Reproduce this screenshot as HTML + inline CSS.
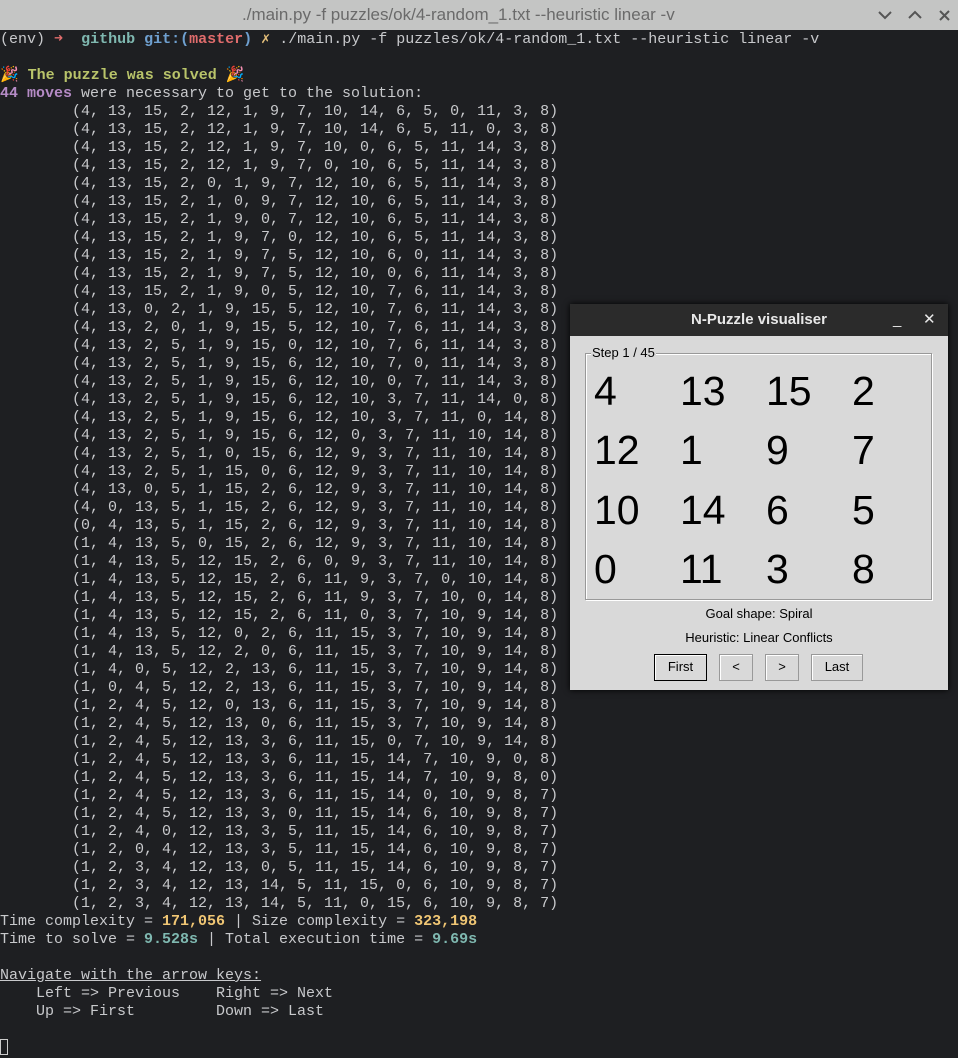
<!DOCTYPE html>
<html><head><meta charset="utf-8"><style>
body{margin:0;width:958px;height:1058px;background:#1e1f22;overflow:hidden;position:relative;font-family:"Liberation Mono",monospace;}
#tb{position:absolute;left:0;top:0;width:958px;height:30px;background:#c4c5c4;color:#6a6a6a;font:17px "Liberation Sans",sans-serif;}
#tb .t{position:absolute;left:242px;top:5px;}
#term{position:absolute;left:0;top:31px;font-size:15px;line-height:18px;color:#c8c9cc;white-space:pre;}
.r{color:#e06c6c}.c{color:#7fb8b0;font-weight:bold}.b{color:#6fa0d0;font-weight:bold}.y{color:#e5c07b}.g{color:#b9c46a;font-weight:bold}.p{color:#b58bc6;font-weight:bold}.o{color:#f0c674;font-weight:bold}.tl{color:#7fb8b0;font-weight:bold}
#win{position:absolute;left:570px;top:304px;width:378px;height:386px;background:#d9d9d9;font-family:"Liberation Sans",sans-serif;box-shadow:0 0 6px #000;}
#wt{height:32px;background:#2b2b2b;color:#e8e8e8;font-size:15px;font-weight:bold;text-align:center;line-height:32px;position:relative;}
#grp{position:absolute;left:15px;top:49px;width:345px;height:245px;border:1px solid #999;box-shadow:inset 1px 1px #fff,1px 1px #fff;}
#grp .l{position:absolute;left:5px;top:-9px;background:#d9d9d9;font-size:13px;padding:0 1px;color:#000;}
.n{position:absolute;font-size:41px;color:#000;}
.lab{position:absolute;width:378px;text-align:center;font-size:13px;color:#000;}
.btn{position:absolute;top:350px;height:25px;border:1px solid #999;box-shadow:inset 1px 1px #fff;text-align:center;font-size:13px;line-height:24px;color:#000;}
</style></head><body>
<div id="tb"><span class="t">./main.py -f puzzles/ok/4-random_1.txt --heuristic linear -v</span>
<svg style="position:absolute;left:876px;top:8px" width="80" height="14"><path d="M3 4l6 6 6-6" stroke="#555" stroke-width="2" fill="none"/><path d="M33 10l6-6 6 6" stroke="#555" stroke-width="2" fill="none"/><path d="M64 3l9 9M73 3l-9 9" stroke="#555" stroke-width="2"/></svg></div>
<div id="term">(env) <span class="r">➜</span>  <span class="c">github</span> <span class="b">git:(</span><span class="r" style="font-weight:bold">master</span><span class="b">)</span> <span class="y">✗</span> ./main.py -f puzzles/ok/4-random_1.txt --heuristic linear -v

<span class="g">🎉 The puzzle was solved 🎉</span>
<span class="p">44 moves</span> were necessary to get to the solution:
        (4, 13, 15, 2, 12, 1, 9, 7, 10, 14, 6, 5, 0, 11, 3, 8)
        (4, 13, 15, 2, 12, 1, 9, 7, 10, 14, 6, 5, 11, 0, 3, 8)
        (4, 13, 15, 2, 12, 1, 9, 7, 10, 0, 6, 5, 11, 14, 3, 8)
        (4, 13, 15, 2, 12, 1, 9, 7, 0, 10, 6, 5, 11, 14, 3, 8)
        (4, 13, 15, 2, 0, 1, 9, 7, 12, 10, 6, 5, 11, 14, 3, 8)
        (4, 13, 15, 2, 1, 0, 9, 7, 12, 10, 6, 5, 11, 14, 3, 8)
        (4, 13, 15, 2, 1, 9, 0, 7, 12, 10, 6, 5, 11, 14, 3, 8)
        (4, 13, 15, 2, 1, 9, 7, 0, 12, 10, 6, 5, 11, 14, 3, 8)
        (4, 13, 15, 2, 1, 9, 7, 5, 12, 10, 6, 0, 11, 14, 3, 8)
        (4, 13, 15, 2, 1, 9, 7, 5, 12, 10, 0, 6, 11, 14, 3, 8)
        (4, 13, 15, 2, 1, 9, 0, 5, 12, 10, 7, 6, 11, 14, 3, 8)
        (4, 13, 0, 2, 1, 9, 15, 5, 12, 10, 7, 6, 11, 14, 3, 8)
        (4, 13, 2, 0, 1, 9, 15, 5, 12, 10, 7, 6, 11, 14, 3, 8)
        (4, 13, 2, 5, 1, 9, 15, 0, 12, 10, 7, 6, 11, 14, 3, 8)
        (4, 13, 2, 5, 1, 9, 15, 6, 12, 10, 7, 0, 11, 14, 3, 8)
        (4, 13, 2, 5, 1, 9, 15, 6, 12, 10, 0, 7, 11, 14, 3, 8)
        (4, 13, 2, 5, 1, 9, 15, 6, 12, 10, 3, 7, 11, 14, 0, 8)
        (4, 13, 2, 5, 1, 9, 15, 6, 12, 10, 3, 7, 11, 0, 14, 8)
        (4, 13, 2, 5, 1, 9, 15, 6, 12, 0, 3, 7, 11, 10, 14, 8)
        (4, 13, 2, 5, 1, 0, 15, 6, 12, 9, 3, 7, 11, 10, 14, 8)
        (4, 13, 2, 5, 1, 15, 0, 6, 12, 9, 3, 7, 11, 10, 14, 8)
        (4, 13, 0, 5, 1, 15, 2, 6, 12, 9, 3, 7, 11, 10, 14, 8)
        (4, 0, 13, 5, 1, 15, 2, 6, 12, 9, 3, 7, 11, 10, 14, 8)
        (0, 4, 13, 5, 1, 15, 2, 6, 12, 9, 3, 7, 11, 10, 14, 8)
        (1, 4, 13, 5, 0, 15, 2, 6, 12, 9, 3, 7, 11, 10, 14, 8)
        (1, 4, 13, 5, 12, 15, 2, 6, 0, 9, 3, 7, 11, 10, 14, 8)
        (1, 4, 13, 5, 12, 15, 2, 6, 11, 9, 3, 7, 0, 10, 14, 8)
        (1, 4, 13, 5, 12, 15, 2, 6, 11, 9, 3, 7, 10, 0, 14, 8)
        (1, 4, 13, 5, 12, 15, 2, 6, 11, 0, 3, 7, 10, 9, 14, 8)
        (1, 4, 13, 5, 12, 0, 2, 6, 11, 15, 3, 7, 10, 9, 14, 8)
        (1, 4, 13, 5, 12, 2, 0, 6, 11, 15, 3, 7, 10, 9, 14, 8)
        (1, 4, 0, 5, 12, 2, 13, 6, 11, 15, 3, 7, 10, 9, 14, 8)
        (1, 0, 4, 5, 12, 2, 13, 6, 11, 15, 3, 7, 10, 9, 14, 8)
        (1, 2, 4, 5, 12, 0, 13, 6, 11, 15, 3, 7, 10, 9, 14, 8)
        (1, 2, 4, 5, 12, 13, 0, 6, 11, 15, 3, 7, 10, 9, 14, 8)
        (1, 2, 4, 5, 12, 13, 3, 6, 11, 15, 0, 7, 10, 9, 14, 8)
        (1, 2, 4, 5, 12, 13, 3, 6, 11, 15, 14, 7, 10, 9, 0, 8)
        (1, 2, 4, 5, 12, 13, 3, 6, 11, 15, 14, 7, 10, 9, 8, 0)
        (1, 2, 4, 5, 12, 13, 3, 6, 11, 15, 14, 0, 10, 9, 8, 7)
        (1, 2, 4, 5, 12, 13, 3, 0, 11, 15, 14, 6, 10, 9, 8, 7)
        (1, 2, 4, 0, 12, 13, 3, 5, 11, 15, 14, 6, 10, 9, 8, 7)
        (1, 2, 0, 4, 12, 13, 3, 5, 11, 15, 14, 6, 10, 9, 8, 7)
        (1, 2, 3, 4, 12, 13, 0, 5, 11, 15, 14, 6, 10, 9, 8, 7)
        (1, 2, 3, 4, 12, 13, 14, 5, 11, 15, 0, 6, 10, 9, 8, 7)
        (1, 2, 3, 4, 12, 13, 14, 5, 11, 0, 15, 6, 10, 9, 8, 7)
Time complexity = <span class="o">171,056</span> | Size complexity = <span class="o">323,198</span>
Time to solve = <span class="tl">9.528s</span> | Total execution time = <span class="tl">9.69s</span>

<u>Navigate with the arrow keys:</u>
    Left =&gt; Previous    Right =&gt; Next
    Up =&gt; First         Down =&gt; Last

<span style="display:inline-block;width:8px;height:16px;border:1px solid #ccc;box-sizing:border-box;vertical-align:middle"></span></div>
<div id="win">
<div id="wt">N-Puzzle visualiser<span style="position:absolute;left:323px;top:0;font-weight:normal">_</span><span style="position:absolute;left:353px;top:0;font-weight:normal">✕</span></div>
<div id="grp"><span class="l">Step 1 / 45</span></div>
<div class="n" style="left:24px;top:64px">4</div><div class="n" style="left:110px;top:64px">13</div><div class="n" style="left:196px;top:64px">15</div><div class="n" style="left:282px;top:64px">2</div>
<div class="n" style="left:24px;top:123px">12</div><div class="n" style="left:110px;top:123px">1</div><div class="n" style="left:196px;top:123px">9</div><div class="n" style="left:282px;top:123px">7</div>
<div class="n" style="left:24px;top:183px">10</div><div class="n" style="left:110px;top:183px">14</div><div class="n" style="left:196px;top:183px">6</div><div class="n" style="left:282px;top:183px">5</div>
<div class="n" style="left:24px;top:242px">0</div><div class="n" style="left:110px;top:242px">11</div><div class="n" style="left:196px;top:242px">3</div><div class="n" style="left:282px;top:242px">8</div>
<div class="lab" style="top:302px">Goal shape: Spiral</div>
<div class="lab" style="top:326px">Heuristic: Linear Conflicts</div>
<div class="btn" style="left:84px;width:51px;border-color:#000">First</div>
<div class="btn" style="left:149px;width:32px">&lt;</div>
<div class="btn" style="left:195px;width:32px">&gt;</div>
<div class="btn" style="left:241px;width:50px">Last</div>
</div>
</body></html>
